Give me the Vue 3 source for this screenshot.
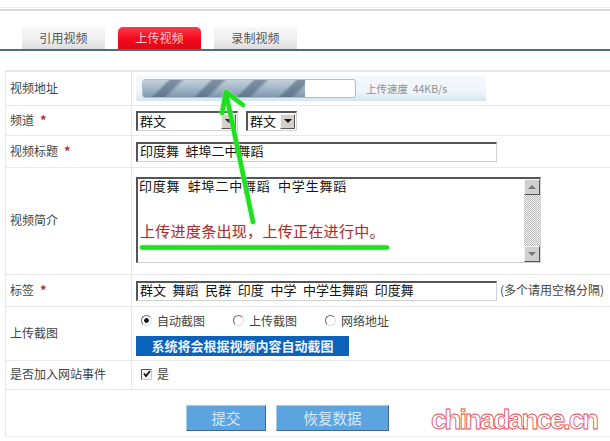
<template>
  <div class="page">
    <div class="top-lines"></div>

    <!-- Tabs -->
    <div class="tabs">
      <div
        v-for="tab in tabs"
        :key="tab"
        class="tab"
        :class="{ active: tab === activeTab }"
      >
        {{ tab }}
      </div>
    </div>

    <!-- Form -->
    <div class="form">
      <div class="row row-url">
        <div class="label">视频地址</div>
        <div class="value">
          <div class="progress-box">
            <div class="bar"><div class="bar-fill" :style="{ width: progress + 'px' }"></div></div>
            <span class="speed">上传速度&nbsp; 44KB/s</span>
          </div>
        </div>
      </div>

      <div class="row row-channel">
        <div class="label">频道 <i class="req">*</i></div>
        <div class="value">
          <div class="select wide">
            <span>群文</span>
            <b class="arrow"><em class="tri"></em></b>
          </div>
          <div class="select narrow">
            <span>群文</span>
            <b class="arrow"><em class="tri"></em></b>
          </div>
        </div>
      </div>

      <div class="row row-title">
        <div class="label">视频标题 <i class="req">*</i></div>
        <div class="value">
          <div class="field">印度舞&nbsp; 蚌埠二中舞蹈</div>
        </div>
      </div>

      <div class="row row-desc">
        <div class="label">视频简介</div>
        <div class="value">
          <div class="textarea">
            <div class="textarea-text">印度舞&nbsp; 蚌埠二中舞蹈&nbsp; 中学生舞蹈</div>
            <div class="scrollbar">
              <b class="arrow sb"><em class="tri up"></em></b>
              <div class="track"></div>
              <b class="arrow sb"><em class="tri down"></em></b>
            </div>
          </div>
        </div>
      </div>

      <div class="row row-tags">
        <div class="label">标签 <i class="req">*</i></div>
        <div class="value">
          <div class="field">群文&nbsp; 舞蹈&nbsp; 民群&nbsp; 印度&nbsp; 中学&nbsp; 中学生舞蹈&nbsp; 印度舞</div>
          <span class="hint">(多个请用空格分隔)</span>
        </div>
      </div>

      <div class="row row-shot">
        <div class="label">上传截图</div>
        <div class="value stack">
          <div class="radios">
            <label v-for="(r, i) in radios" :key="r" class="radio-item">
              <span class="radio" :class="{ on: i === 0 }"></span>{{ r }}
            </label>
          </div>
          <div class="notice">系统将会根据视频内容自动截图</div>
        </div>
      </div>

      <div class="row row-event">
        <div class="label">是否加入网站事件</div>
        <div class="value">
          <span class="check">
            <svg width="8" height="8" viewBox="0 0 8 8"><path d="M1 3.500 3 6 7 1" fill="none" stroke="#111" stroke-width="1.800" /></svg>
          </span>
          <span class="check-label">是</span>
        </div>
      </div>

      <div class="row row-actions">
        <button class="btn submit">提交</button>
        <button class="btn reset">恢复数据</button>
      </div>
    </div>

    <!-- Annotation drawn over the form -->
    <svg class="marks" width="610" height="441" viewBox="0 0 610 441">
      <g fill="none" stroke="#1fe01f" stroke-width="4.500" stroke-linecap="round" stroke-linejoin="round" class="glow">
        <path d="M253 222 226 93" />
        <path d="M222 113 226 92 243 105" />
        <path d="M142 247.500 387 247.500" />
      </g>
    </svg>
    <div class="annotation">上传进度条出现，上传正在进行中。</div>
    <div class="watermark">chinadance.cn</div>
  </div>
</template>

<script setup>
const tabs = ["引用视频", "上传视频", "录制视频"];
const activeTab = "上传视频";
const radios = ["自动截图", "上传截图", "网络地址"];
const progress = 162;
</script>

<style>
html,
body {
  margin: 0;
  background: #fff;
  overflow: hidden;
}
</style>

<style scoped>
.page {
  position: relative;
  width: 610px;
  height: 441px;
  overflow: hidden;
  background: #fff;
  color: #333;
  font-family: "Noto Sans CJK SC", "Liberation Sans", sans-serif;
  font-size: 12px;
}

.top-lines {
  height: 1px;
  margin-top: 7px;
  background: #ececec;
  border-bottom: 1px solid #fff;
  box-shadow: 0 2px 0 #d8d8d8;
}

/* Tabs */
.tabs {
  display: flex;
  gap: 13px;
  height: 22px;
  margin-top: 18px;
  padding-left: 22px;
  border-bottom: 2px solid #4d6f78;
}

.tab {
  width: 83px;
  height: 22px;
  line-height: 21px;
  text-align: center;
  color: #555;
  letter-spacing: 0.1px;
  background: linear-gradient(#f7f7f7, #f0f0f0 55%, #dcdcdc);
}

.tab.active {
  color: #ffc9cf;
  border-radius: 5px 5px 0 0;
  background: linear-gradient(#f2404f, #f80a1e 50%, #d90a1a);
}

/* Form */
.form {
  margin: 19px 0 0 5px;
  border-top: 2px solid #e6e6e6;
  border-left: 1px solid #e8e8e8;
}

.row {
  display: flex;
  box-sizing: border-box;
  border-bottom: 1px solid #e8e8e8;
}

.row-url { height: 34px; }
.row-channel { height: 30px; }
.row-title { height: 32px; }
.row-desc { height: 107px; }
.row-tags { height: 32px; }
.row-shot { height: 54px; }
.row-event { height: 29px; }
.row-actions {
  height: 47px;
  gap: 10px;
  padding: 15px 0 0 180px;
}

.label {
  display: flex;
  align-items: center;
  gap: 6px;
  box-sizing: border-box;
  width: 126px;
  padding: 0 0 3px 4px;
  border-right: 1px solid #e8e8e8;
  color: #444;
}

.req {
  color: #b3323c;
  font-style: normal;
  font-weight: bold;
  font-size: 13px;
}

.value {
  display: flex;
  align-items: center;
  flex: 1;
  padding-left: 4px;
}

/* Upload progress */
.progress-box {
  display: flex;
  align-items: center;
  width: 350px;
  height: 25px;
  padding-left: 6px;
  box-sizing: border-box;
  background: linear-gradient(#f5f8fb, #eef4f9 65%, #d4e6f1);
}

.bar {
  box-sizing: border-box;
  width: 214px;
  height: 19px;
  background: #fff;
  border: 1px solid #a9bdca;
  border-radius: 3px;
  overflow: hidden;
}

.bar-fill {
  height: 100%;
  background:
    repeating-linear-gradient(135deg, rgba(70, 92, 114, 0) 0 17px, rgba(70, 92, 114, 0.55) 20px 26px, rgba(70, 92, 114, 0) 30px),
    linear-gradient(#c4d0dc, #a3b6c8 50%, #7d97ad);
}

.speed {
  margin-left: 10px;
  color: #8a8f94;
  font-size: 10.500px;
}

/* Fake native controls */
.select,
.field,
.textarea {
  box-sizing: border-box;
  border: 1px solid #d0d0d0;
  border-top: 2px solid #555;
  border-left: 2px solid #555;
  background: #fff;
  color: #111;
  font-size: 13px;
}

.select {
  display: flex;
  align-items: center;
  justify-content: space-between;
  height: 20px;
  padding: 0 1px 0 2px;
}

.select span {
  margin-top: -2px;
}

.select.wide { width: 102px; margin-right: 8px; }
.select.narrow { width: 51px; }

.arrow {
  display: flex;
  align-items: center;
  justify-content: center;
  box-sizing: border-box;
  width: 15px;
  height: 15px;
  background: #d4d0c8;
  border: 1px solid;
  border-color: #f4f4f4 #555 #555 #f4f4f4;
}

.tri {
  width: 0;
  height: 0;
  border: 4px solid transparent;
  border-bottom: 0;
  border-top-color: #111;
}

.tri.up {
  border-top: 0;
  border-bottom: 4px solid #777;
}

.tri.down {
  border-top-color: #777;
}

.field {
  width: 361px;
  height: 20px;
  line-height: 14px;
  padding-left: 2px;
  word-spacing: 0.400px;
}

.hint {
  margin: -2px 0 0 3px;
  color: #444;
  font-size: 12px;
  white-space: nowrap;
}

.textarea {
  display: flex;
  width: 405px;
  height: 86px;
  margin-top: -3px;
}

.textarea-text {
  flex: 1;
  padding-left: 1px;
  line-height: 14px;
  letter-spacing: 0.800px;
}

.scrollbar {
  display: flex;
  flex-direction: column;
  width: 16px;
}

.arrow.sb {
  width: 16px;
  height: 16px;
  background: #cfcfcf;
}

.track {
  flex: 1;
  background: repeating-conic-gradient(#bbb 0 25%, #f2f2f2 0 50%) 0 0 / 2px 2px;
}

/* Thumbnail options */
.value.stack {
  flex-direction: column;
  align-items: flex-start;
  padding-top: 0;
  box-sizing: border-box;
  justify-content: flex-start;
}

.radios {
  display: flex;
  height: 24px;
  margin-top: 1px;
  align-items: center;
  padding-left: 5px;
}

.radio-item {
  display: flex;
  align-items: center;
  gap: 5px;
  width: 92px;
  color: #444;
}

.radio {
  box-sizing: border-box;
  width: 11px;
  height: 11px;
  border: 1px solid;
  border-color: #666 #ddd #ddd #666;
  border-radius: 50%;
  background: #fff;
}

.radio.on {
  background: radial-gradient(circle, #111 0 2px, #fff 2.600px);
}

.notice {
  width: 213px;
  height: 20px;
  margin-top: 4px;
  line-height: 19px;
  text-align: center;
  background: #0b62b8;
  color: #eaf3ff;
  font-size: 13px;
  font-weight: bold;
}

/* Checkbox */
.check {
  display: flex;
  align-items: center;
  justify-content: center;
  box-sizing: border-box;
  width: 11px;
  height: 11px;
  margin: -2px 0 0 5px;
  border: 1px solid;
  border-color: #555 #ccc #ccc #555;
  background: #f4f4f4;
}

.check-label {
  margin: -3px 0 0 5px;
  color: #444;
}

/* Buttons */
.btn {
  box-sizing: border-box;
  height: 26px;
  padding: 0 0 2px;
  border: 1px solid;
  border-color: #a9cbe6 #41688c #41688c #a9cbe6;
  background: #5ba4e0;
  color: #d6e9f8;
  font-family: inherit;
  font-size: 14.500px;
}

.submit { width: 80px; }
.reset { width: 113px; }

/* Annotation */
.marks {
  position: absolute;
  top: 0;
  left: 0;
  pointer-events: none;
}

.glow {
  filter: drop-shadow(0 0 1px #9ff09f);
}

.annotation {
  position: absolute;
  top: 220px;
  left: 140px;
  color: #a5302f;
  font-size: 15px;
  letter-spacing: 0.300px;
  line-height: 22px;
  white-space: nowrap;
  text-shadow: 0 0 2px #f7d3d3;
}

.watermark {
  position: absolute;
  top: 405px;
  left: 431px;
  color: #fff;
  -webkit-text-stroke: 0.800px #e8474f;
  font-family: "Liberation Sans", sans-serif;
  font-size: 28px;
  font-weight: bold;
  line-height: 30px;
  letter-spacing: -2.200px;
  white-space: nowrap;
}
</style>
